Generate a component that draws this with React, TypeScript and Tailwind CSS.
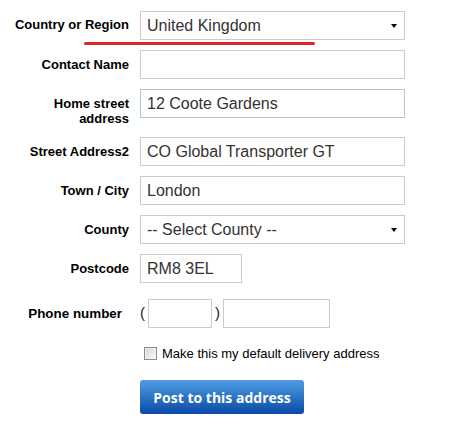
import React from "react";

const labelCls =
  "w-[129px] shrink-0 text-right text-[13px] leading-[15px] font-bold text-black pt-[7px]";
const inputCls =
  "h-[29px] w-[265px] border border-[#cbcbcb] bg-white px-[6px] flex items-center text-[16px] text-[#333] whitespace-nowrap";

function Arrow() {
  return (
    <div className="ml-auto mr-[1px] w-0 h-0 border-x-[3.5px] border-x-transparent border-t-[4px] border-t-black" />
  );
}

export default function App() {
  return (
    <div className="relative w-[464px] h-[438px] bg-white pt-[11px] font-['Liberation_Sans',Arial,sans-serif]">
      <div className="flex flex-col gap-[10px]">
        <div className="flex gap-[11px]">
          <div className={labelCls + " !pt-[6px]"}>Country or Region</div>
          <div className={inputCls}>
            <span>United Kingdom</span>
            <Arrow />
          </div>
        </div>
        <div className="flex gap-[11px]">
          <div className={labelCls}>Contact Name</div>
          <div className={inputCls}></div>
        </div>
        <div className="flex gap-[11px] pb-[1px]">
          <div className={labelCls}>
            Home street
            <br />
            address
          </div>
          <div className={inputCls + " !border-[#b1c4d6]"}>12 Coote Gardens</div>
        </div>
        <div className="flex gap-[11px]">
          <div className={labelCls}>Street Address2</div>
          <div className={inputCls}>CO Global Transporter GT</div>
        </div>
        <div className="flex gap-[11px]">
          <div className={labelCls}>Town / City</div>
          <div className={inputCls}>London</div>
        </div>
        <div className="flex gap-[11px]">
          <div className={labelCls}>County</div>
          <div className={inputCls}>
            <span>-- Select County --</span>
            <Arrow />
          </div>
        </div>
        <div className="flex gap-[11px]">
          <div className={labelCls}>Postcode</div>
          <div className={inputCls + " !w-[102px]"}>RM8 3EL</div>
        </div>
        <div className="flex gap-[11px] mt-[6px]">
          <div className={labelCls + " pr-[7px] !text-[13.4px]"}>Phone number</div>
          <div className="flex items-center text-[15px] text-[#222]">
            <span className="w-[8px]">(</span>
            <div className="h-[29px] w-[64px] border border-[#cbcbcb] bg-white" />
            <span className="w-[11px] text-center">)</span>
            <div className="h-[29px] w-[107px] border border-[#cbcbcb] bg-white" />
          </div>
        </div>
      </div>

      <div className="mt-[18px] ml-[144px] flex items-center h-[15px]">
        <div className="w-[13px] h-[13px] border border-[#8a8a8a] bg-gradient-to-br from-[#d6d6d6] to-[#f7f7f7] shadow-[inset_0_0_0_1px_#ffffff80]" />
        <span className="ml-[5px] text-[13px] leading-[15px] text-black whitespace-nowrap">
          Make this my default delivery address
        </span>
      </div>

      <div className="mt-[19px] ml-[140px] w-[164px] h-[34px] rounded-[3px] bg-gradient-to-b from-[#4d9de2] to-[#0a4aa6] flex items-center justify-center text-white text-[14px] font-bold font-['Open_Sans',sans-serif] whitespace-nowrap">
        Post to this address
      </div>

      <div className="absolute left-[84px] top-[42px] w-[231px] h-[3px] rounded-full bg-[#e3242b]" />
    </div>
  );
}
